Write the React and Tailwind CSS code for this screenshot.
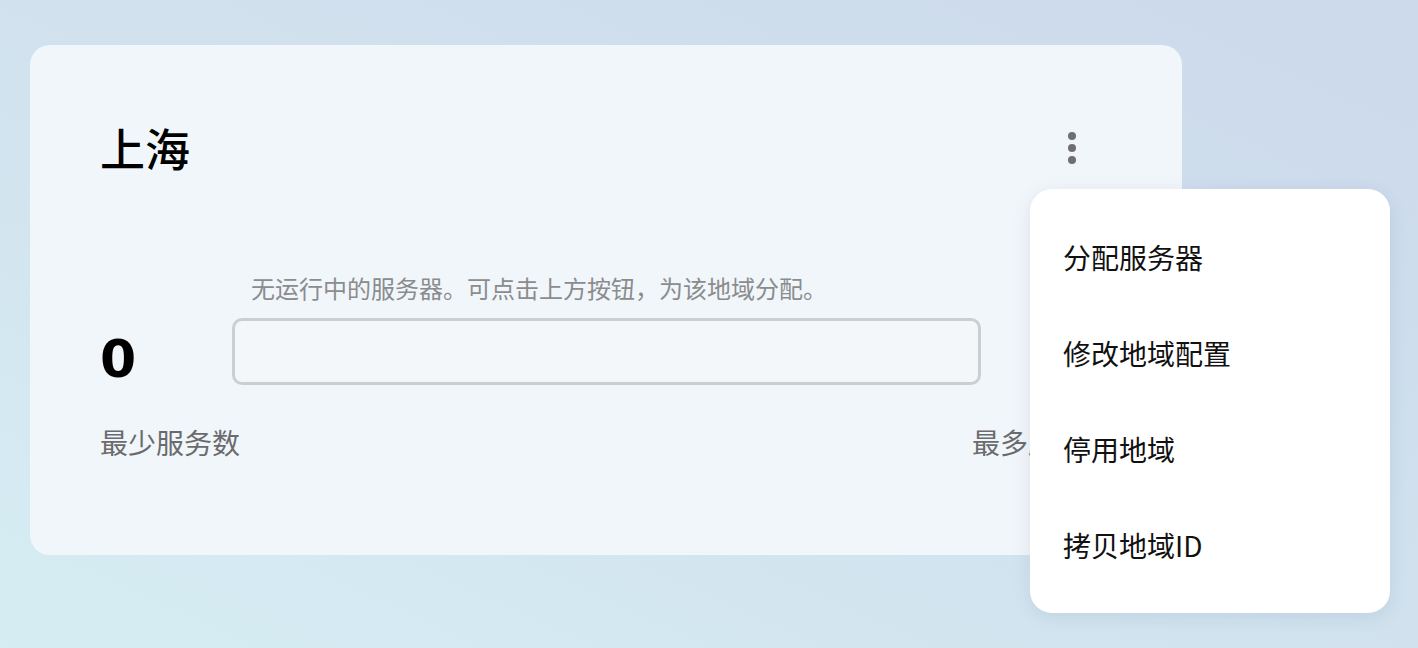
import { useState } from "react";

const menuItems = ["分配服务器", "修改地域配置", "停用地域", "拷贝地域ID"];

const RegionCard = () => {
  const [menuOpen, setMenuOpen] = useState(true);

  return (
    <div className="relative w-[1152px]">
      <div className="rounded-[20px] bg-[#f1f6fa] px-[70px] pt-[78px] pb-[96px]">
        <div className="flex items-center justify-between h-[50px]">
          <h2 className="text-[45px] leading-[50px] font-medium text-black">上海</h2>
          <button
            onClick={() => setMenuOpen((v) => !v)}
            className="mr-[34px] flex flex-col items-center gap-[4px] px-[2px] py-[2px]"
          >
            <span className="block w-[8px] h-[8px] rounded-full bg-[#6e6e70]" />
            <span className="block w-[8px] h-[8px] rounded-full bg-[#6e6e70]" />
            <span className="block w-[8px] h-[8px] rounded-full bg-[#6e6e70]" />
          </button>
        </div>

        <div className="mt-[100px] grid grid-cols-[132px_1fr_131px] items-center">
          <div />
          <p className="pl-[19px] pb-[14px] text-[24px] leading-[30px] text-[#8a8c8e]">
            无运行中的服务器。可点击上方按钮，为该地域分配。
          </p>
          <div />
          <div className="pt-[16px] text-[52px] leading-none font-bold text-black font-['DejaVu_Sans',sans-serif]">
            0
          </div>
          <div className="h-[67px] rounded-[10px] border-[3px] border-[#cbcfd3] bg-[#f4f7fa]" />
          <div />
        </div>

        <div className="mt-[40px] flex justify-between text-[28px] leading-[34px] text-[#6a6b6d]">
          <span>最少服务数</span>
          <span>最多服务数</span>
        </div>
      </div>

      {menuOpen && (
        <div className="absolute left-[1000px] top-[144px] w-[360px] rounded-[22px] bg-white py-[20px] shadow-[0_4px_18px_rgba(60,90,130,0.12)]">
          {menuItems.map((item) => (
            <div
              key={item}
              className="flex h-[96px] items-center px-[33px] text-[28px] text-[#111111]"
            >
              {item}
            </div>
          ))}
        </div>
      )}
    </div>
  );
};

export default function App() {
  return (
    <div className="min-h-[648px] w-full bg-linear-to-tr from-[#d6edf3] via-[#d1e2ee] to-[#ccd9eb] pl-[30px] pt-[45px] font-['Noto_Sans_CJK_SC','Noto_Sans',sans-serif]">
      <RegionCard />
    </div>
  );
}
